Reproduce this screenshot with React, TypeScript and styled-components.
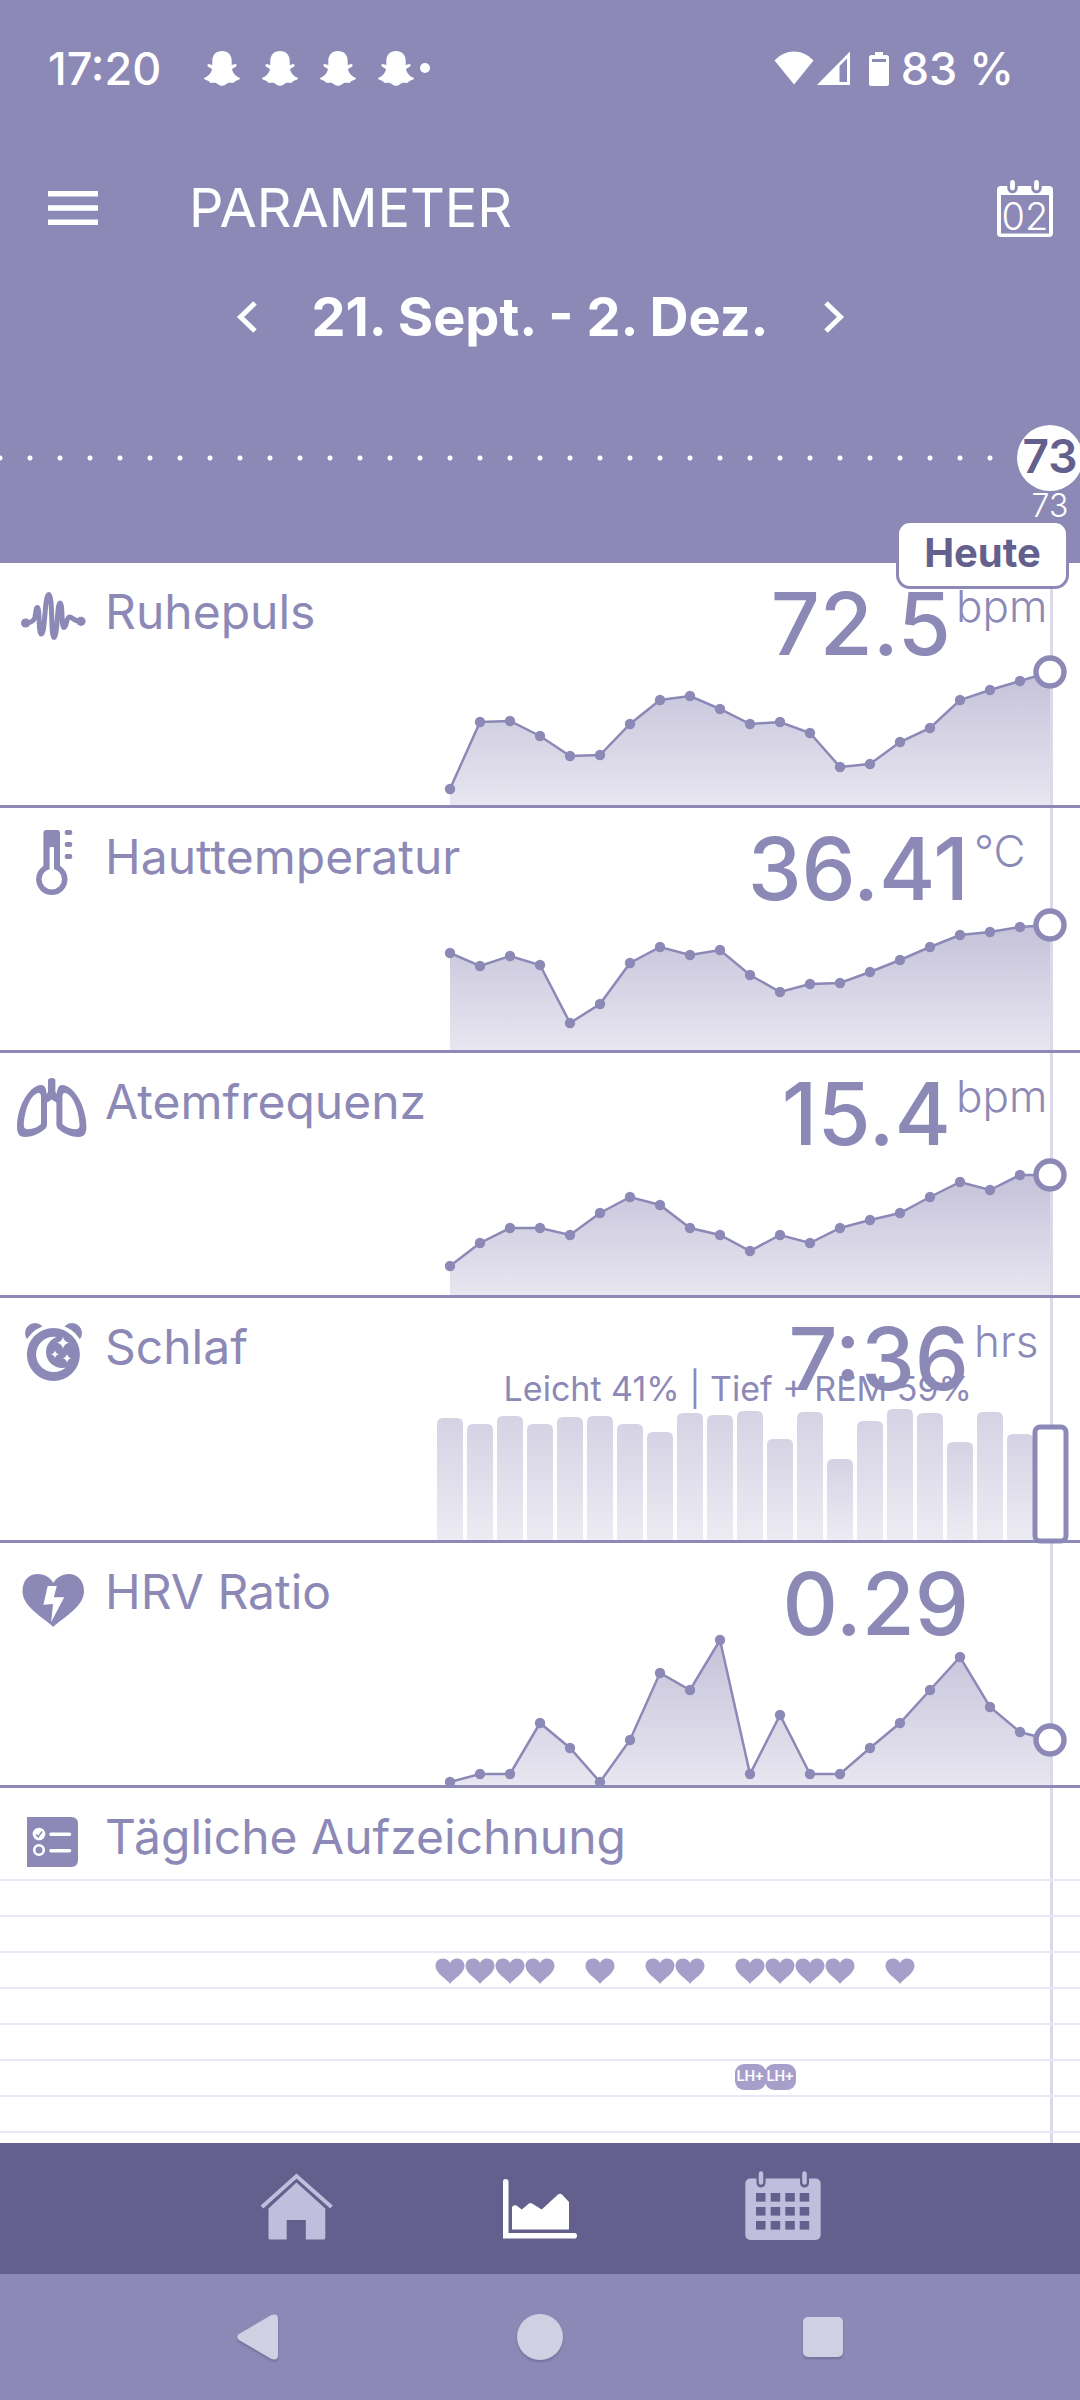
import React, { useId } from "react";
import styled, { createGlobalStyle } from "styled-components";

const color = {
  lilac: "#8d89b7",
  deep: "#63608d",
  guide: "#dcd9ea",
  rule: "#e9e7f6",
  mark: "#a69fca",
  idle: "#c1bddd",
  system: "#d1cfe2",
};

const SLOT = 30;
const CHART_HEIGHT = 242;

const GlobalStyle = createGlobalStyle`
  *, *::before, *::after { box-sizing: border-box; }
  body {
    margin: 0;
    background: #fff;
    font-family: Inter, "Liberation Sans", sans-serif;
    color: ${color.lilac};
  }
  button { border: 0; padding: 0; background: none; color: inherit; font: inherit; cursor: pointer; }
  h1, h2, p { margin: 0; font-weight: inherit; }
  svg { display: block; overflow: visible; }
`;

const Screen = styled.div`
  display: flex;
  flex-direction: column;
  min-height: 100vh;
  overflow: hidden;
`;

const Header = styled.header`
  background: ${color.lilac};
  color: #fff;
`;

const StatusBar = styled.div`
  display: flex;
  align-items: center;
  height: 136px;
  padding: 0 66px 0 48px;
  font-size: 45px;
  font-weight: 500;
`;

const Clock = styled.time`
  width: 156px;
`;

const Notifications = styled.div`
  display: flex;
  align-items: center;
  gap: 22px;
  flex: 1;
`;

const MoreDot = styled.span`
  width: 10px;
  height: 10px;
  margin-left: -16px;
  border-radius: 50%;
  background: #fff;
`;

const Signals = styled.div`
  display: flex;
  align-items: center;
  margin-right: 12px;
`;

const AppBar = styled.div`
  display: flex;
  align-items: center;
  height: 144px;
  padding: 0 27px 0 48px;
`;

const Title = styled.h1`
  flex: 1;
  padding-left: 91px;
  font-size: 54px;
  line-height: 60px;
  font-weight: 400;
`;

const TodayButton = styled.button`
  display: grid;
  width: 56px;
  height: 57px;

  > * { grid-area: 1 / 1; }
`;

const TodayNumber = styled.span`
  padding-top: 17px;
  font-size: 38px;
  line-height: 38px;
  font-weight: 300;
  text-align: center;
`;

const RangePicker = styled.div`
  display: flex;
  align-items: center;
  justify-content: center;
  height: 74px;
`;

const Range = styled.h2`
  width: 567px;
  font-size: 54px;
  line-height: 60px;
  font-weight: 700;
  text-align: center;
  white-space: nowrap;
`;

const Timeline = styled.div`
  position: relative;
  display: flex;
  height: 209px;
  padding-top: 71px;
`;

const Track = styled.div`
  flex: 1;
  height: 66px;
  margin-right: 15px;
  background: radial-gradient(circle, #fff 2px, transparent 3px) right center / ${SLOT}px 66px repeat-x;
`;

const DayMark = styled.div`
  display: flex;
  flex-direction: column;
  align-items: center;
  width: 60px;
`;

const DayCircle = styled.strong`
  flex: none;
  width: 66px;
  height: 66px;
  border-radius: 50%;
  background: #fff;
  color: ${color.deep};
  font-size: 46px;
  line-height: 62px;
  font-weight: 600;
  text-align: center;
`;

const DayNumber = styled.span`
  font-size: 32px;
  line-height: 30px;
  font-weight: 300;
`;

const TodayTag = styled.div`
  position: absolute;
  right: 11px;
  bottom: -26px;
  width: 173px;
  height: 69px;
  border: 3px solid ${color.lilac};
  border-radius: 14px;
  background: #fff;
  color: ${color.deep};
  font-size: 40px;
  line-height: 60px;
  font-weight: 700;
  text-align: center;
`;

const Panels = styled.main`
  flex: 1;
  display: flex;
  flex-direction: column;
  background: linear-gradient(${color.guide}, ${color.guide}) right 27px top / 3px 100% no-repeat #fff;
`;

const Panel = styled.section`
  display: grid;
  height: 245px;
  border-bottom: 3px solid ${color.lilac};

  > * { grid-area: 1 / 1; }
`;

const PanelHead = styled.div`
  display: flex;
  align-items: flex-start;
  height: 91px;
`;

const IconBox = styled.svg`
  flex: none;
  width: 105px;
  height: 92px;
  color: ${color.lilac};
`;

const Label = styled.h2`
  flex: 1;
  padding-top: 25px;
  font-size: 48px;
  line-height: 48px;
  font-weight: 400;
  white-space: nowrap;
`;

const Reading = styled.p`
  padding-top: 18px;
  font-size: 86px;
  line-height: 86px;
  font-weight: 500;
`;

const Unit = styled.span<{ $wide: boolean }>`
  width: ${(p) => (p.$wide ? 129 : 111)}px;
  padding: 21px 0 0 5px;
  font-size: 44px;
  line-height: 44px;
  font-weight: 300;
`;

const Note = styled.p`
  justify-self: end;
  padding: 74px 108px 0 0;
  font-size: 34px;
  line-height: 34px;
  font-weight: 400;
`;

const Plot = styled.svg`
  justify-self: end;
  width: ${SLOT * 21}px;
  height: ${CHART_HEIGHT}px;
  margin-right: 15px;
`;

const Log = styled.section`
  flex: 1;
`;

const LogRow = styled.div`
  display: grid;
  grid-template-columns: repeat(21, ${SLOT}px);
  justify-content: end;
  justify-items: center;
  align-items: center;
  height: 36px;
  padding: 2px 15px 0 0;
  border-top: 2px solid ${color.rule};
`;

const Slot = styled.span<{ $day: number }>`
  grid-column: ${(p) => p.$day + 1};
  grid-row: 1;
`;

const LhBadge = styled.span`
  display: block;
  width: 31px;
  height: 26px;
  margin-bottom: 4px;
  border-radius: 9px;
  background: ${color.mark};
  color: #fff;
  font-family: Roboto, "Liberation Sans", sans-serif;
  font-size: 15px;
  line-height: 25px;
  font-weight: 500;
  text-align: center;
`;

const TabBar = styled.nav`
  display: flex;
  justify-content: center;
  height: 131px;
  background: ${color.deep};
`;

const Tab = styled.a<{ $active?: boolean }>`
  display: flex;
  justify-content: center;
  width: 243px;
  padding-top: 28px;
  color: ${(p) => (p.$active ? "#fff" : color.idle)};
`;

const SystemBar = styled.div`
  display: flex;
  justify-content: center;
  align-items: center;
  height: 126px;
  background: ${color.lilac};
`;

const SystemButton = styled.button`
  display: flex;
  justify-content: center;
  width: 283px;

  svg { filter: drop-shadow(0 2px 1px rgba(70, 66, 110, 0.35)); }
`;

const Ghost = () => (
  <svg width="36" height="35" viewBox="0 0 36 35" fill="#fff" aria-hidden="true">
    <path d="M18 0C12 0 8.3 4 8.3 10V14L4.6 13C3 13.2 3 15 4.2 15.8L8 18C7.3 22 4 25.5.4 26.8C-.2 27.6 0 28 1 28.6L5 30.2L6 31.8L11.5 31.8C13.5 32.5 15 34.8 18 34.8C21 34.8 22.5 32.5 24.5 31.8L30 31.8L31 30.2L35 28.6C36 28 36.2 27.6 35.6 26.8C32 25.5 28.7 22 28 18L31.8 15.8C33 15 33 13.2 31.4 13L27.7 14V10C27.7 4 24 0 18 0Z" />
  </svg>
);

const PulseIcon = () => (
  <IconBox viewBox="0 0 105 92" aria-hidden="true">
    <g fill="currentColor">
      <circle cx="25.6" cy="60" r="4.6" />
      <circle cx="81" cy="58.3" r="4.6" />
    </g>
    <path
      d="M25.6 60C31 60 34 58 35 54C36 48 36 44.5 37.5 44.5C39.8 44.5 38.3 71 41.3 71C45.3 71 44.5 31.5 48.8 31.5C53 31.5 50.5 74.5 54 74.5C57.5 74.5 57 40 60 40C63 40 61 64.5 64 64.5C67 64.5 66 54 69.5 54C73 54 74 59 81 58.3"
      fill="none"
      stroke="currentColor"
      strokeWidth="5"
      strokeLinecap="round"
    />
  </IconBox>
);

const ThermometerIcon = () => (
  <IconBox viewBox="0 0 105 92" fill="currentColor" aria-hidden="true">
    <rect x="43.4" y="22" width="16.6" height="45" rx="3" />
    <circle cx="51.8" cy="71.3" r="15.7" />
    <circle cx="51.8" cy="71.3" r="10.2" fill="#fff" />
    <path d="M49.6 64V40Q49.6 39 50.6 39H53Q54 39 54 40V64Z" fill="#fff" />
    <rect x="64.7" y="22" width="7.5" height="5" rx="2" />
    <rect x="64.7" y="34" width="7.5" height="5" rx="2" />
    <rect x="64.7" y="46" width="7.5" height="5" rx="2" />
  </IconBox>
);

const LUNG =
  "M41 32C30.5 32 17 52 17 74C17 80 19 84 24.5 84C34 84 42 79 45.5 75.5C47 74 47 72 47 70V48C47 38 46 32 41 32ZM38 40C30 42 24.5 58 23.8 72C23.8 75 25 76.2 28 76.2C33 76.2 38 74 41 71V44C41 41 40 39.5 38 40Z";

const LungsIcon = () => (
  <IconBox viewBox="0 0 105 92" fill="currentColor" fillRule="evenodd" aria-hidden="true">
    <path d={LUNG} />
    <path d={LUNG} transform="translate(103.4 0) scale(-1 1)" />
    <path d="M48 27.5Q48 25 51.7 25Q55.4 25 55.4 27.5V39L58.5 43V51L51.7 46.5L45 51V43L48 39Z" />
  </IconBox>
);

const SleepIcon = () => (
  <IconBox viewBox="0 0 105 92" fill="currentColor" aria-hidden="true">
    <circle cx="35" cy="35" r="10" />
    <circle cx="72" cy="35" r="10" />
    <circle cx="53.4" cy="57.5" r="31" fill="#fff" />
    <circle cx="53.4" cy="56.5" r="26.5" />
    <circle cx="53.8" cy="56.4" r="17.7" fill="#fff" />
    <circle cx="62" cy="54" r="16" />
    <g fill="#fff">
      <path d="M63 38.7Q64 43.7 69 44.7Q64 45.7 63 50.7Q62 45.7 57 44.7Q62 43.7 63 38.7Z" />
      <path d="M55 52.3Q55.6 55.7 59 56.3Q55.6 56.9 55 60.3Q54.4 56.9 51 56.3Q54.4 55.7 55 52.3Z" />
      <path d="M67 56Q67.8 59.5 71.3 60.3Q67.8 61.1 67 64.6Q66.2 61.1 62.7 60.3Q66.2 59.5 67 56Z" />
    </g>
  </IconBox>
);

const HeartBoltIcon = () => (
  <IconBox viewBox="0 0 105 92" aria-hidden="true">
    <path
      d="M53.3 84C43 74 22.5 64 22.5 48C22.5 37 29 31 38 31C45 31 51 35 53.3 40C56 35 62 31 68.5 31C77 31 84 37 84 48C84 64 63.5 74 53.3 84Z"
      fill="currentColor"
    />
    <path d="M47.7 43H56.8L53.8 54.3H64.2L51.2 79L53 61L43.4 61.7Z" fill="#fff" />
  </IconBox>
);

const LogIcon = () => (
  <IconBox viewBox="0 0 105 92" aria-hidden="true">
    <path d="M27 29H71Q78 29 78 36V72Q78 79 71 79H27Z" fill="currentColor" />
    <circle cx="39" cy="46" r="6.3" fill="#fff" />
    <path d="M36 46.5L38.3 48.8L42 43.5" fill="none" stroke="currentColor" strokeWidth="1.4" />
    <circle cx="39" cy="62" r="4.8" fill="none" stroke="#fff" strokeWidth="2.6" />
    <path d="M51 46.3H69.5M51 62.7H69.5" stroke="#fff" strokeWidth="3.6" strokeLinecap="round" />
  </IconBox>
);

const slotX = (i: number) => i * SLOT + SLOT / 2;

function AreaPlot({ tops }: { tops: number[] }) {
  const id = useId();
  const line = tops.map((y, i) => `${slotX(i)},${y}`).join(" ");
  const last = tops.length - 1;
  return (
    <Plot viewBox={`0 0 ${SLOT * 21} ${CHART_HEIGHT}`} aria-hidden="true">
      <defs>
        <linearGradient id={id} x1="0" y1="0" x2="0" y2="1">
          <stop offset="0" stopColor="#c5c2da" />
          <stop offset="1" stopColor="#e8e6f0" />
        </linearGradient>
        <clipPath id={`${id}c`}>
          <rect x="0" y="0" width={SLOT * 22} height={CHART_HEIGHT} />
        </clipPath>
      </defs>
      <g clipPath={`url(#${id}c)`}>
        <polygon points={`${slotX(0)},${CHART_HEIGHT} ${line} ${slotX(last)},${CHART_HEIGHT}`} fill={`url(#${id})`} />
        <polyline points={line} fill="none" stroke={color.lilac} strokeWidth="2.5" />
        {tops.slice(0, last).map((y, i) => (
          <circle key={i} cx={slotX(i)} cy={y} r="5.2" fill={color.lilac} />
        ))}
      </g>
      <circle cx={slotX(last)} cy={tops[last]} r="14" fill="#fff" stroke={color.lilac} strokeWidth="5.4" />
    </Plot>
  );
}

function BarPlot({ tops }: { tops: number[] }) {
  const id = useId();
  const last = tops.length - 1;
  return (
    <Plot viewBox={`0 0 ${SLOT * 21} ${CHART_HEIGHT}`} aria-hidden="true">
      <defs>
        <linearGradient id={id} x1="0" y1="0" x2="0" y2="1">
          <stop offset="0" stopColor="#d5d2e4" />
          <stop offset="1" stopColor="#edebf3" />
        </linearGradient>
      </defs>
      {tops.slice(0, last).map((y, i) => (
        <path
          key={i}
          d={`M${slotX(i) - 13} ${CHART_HEIGHT}V${y + 6}q0 -6 6 -6h14q6 0 6 6V${CHART_HEIGHT}Z`}
          fill={`url(#${id})`}
        />
      ))}
      <rect
        x={slotX(last) - 15}
        y={tops[last] + 2}
        width="31"
        height={CHART_HEIGHT - tops[last] - 1}
        rx="5"
        fill="#fff"
        stroke={color.lilac}
        strokeWidth="5"
      />
    </Plot>
  );
}

const metrics = [
  {
    label: "Ruhepuls", Icon: PulseIcon, value: "72.5", unit: "bpm",
    tops: [226, 159, 158, 173, 193, 192, 161, 137, 133, 146, 161, 159, 170, 204, 201, 179, 165, 137, 127, 118, 109],
  },
  {
    label: "Hauttemperatur", Icon: ThermometerIcon, value: "36.41", unit: "°C",
    tops: [145, 158, 148, 157, 215, 196, 155, 139, 147, 142, 167, 184, 176, 175, 164, 152, 139, 127, 124, 119, 117],
  },
  {
    label: "Atemfrequenz", Icon: LungsIcon, value: "15.4", unit: "bpm",
    tops: [213, 190, 175, 175, 182, 160, 144, 152, 175, 182, 198, 182, 190, 175, 167, 160, 144, 129, 137, 122, 122],
  },
  {
    label: "Schlaf", Icon: SleepIcon, value: "7:36", unit: "hrs", bars: true, note: "Leicht 41% | Tief + REM 59%",
    tops: [120, 126, 118, 126, 119, 118, 126, 134, 115, 117, 113, 141, 114, 161, 123, 111, 115, 144, 114, 136, 127],
  },
  {
    label: "HRV Ratio", Icon: HeartBoltIcon, value: "0.29", unit: "",
    tops: [239, 231, 231, 180, 205, 239, 197, 130, 147, 97, 231, 172, 231, 231, 205, 180, 147, 114, 164, 189, 197],
  },
];

const heartDays = [0, 1, 2, 3, 5, 7, 8, 10, 11, 12, 13, 15];
const lhDays = [10, 11];

const logRows: { id: string; marks: React.ReactNode }[] = [
  { id: "a", marks: null },
  { id: "b", marks: null },
  {
    id: "hearts",
    marks: heartDays.map((d) => (
      <Slot key={d} $day={d}>
        <svg width="30" height="26" viewBox="0 0 30 26" fill={color.mark} aria-hidden="true">
          <path d="M15 26C12 21 .5 15.500 .5 8C.5 3.500 3.500 .5 8 .5C11 .5 14 2.500 15 5C16 2.500 19 .5 22 .5C26.500 .5 29.500 3.500 29.500 8C29.500 15.500 18 21 15 26Z" />
        </svg>
      </Slot>
    )),
  },
  { id: "c", marks: null },
  { id: "d", marks: null },
  {
    id: "lh",
    marks: lhDays.map((d) => (
      <Slot key={d} $day={d}>
        <LhBadge>LH+</LhBadge>
      </Slot>
    )),
  },
  { id: "e", marks: null },
];

const LogEnd = styled.div`
  height: 12px;
  border-top: 2px solid ${color.rule};
`;

export default function App() {
  return (
    <Screen>
      <GlobalStyle />
      <Header>
        <StatusBar>
          <Clock>17:20</Clock>
          <Notifications>
            <Ghost />
            <Ghost />
            <Ghost />
            <Ghost />
            <MoreDot />
          </Notifications>
          <Signals>
            <svg width="115" height="35" viewBox="0 0 115 35" fill="#fff" aria-hidden="true">
              <path d="M.5 9.500C12 -2.500 28 -2.500 39.500 9.500L20 33.500Z" />
              <path fillRule="evenodd" d="M43 34L76 .5V34ZM65.500 15V31H73V7.500Z" />
              <path fillRule="evenodd" d="M101 1H109V4H112.500Q115 4 115 6.500V32.500Q115 35 112.500 35H97.500Q95 35 95 32.500V6.500Q95 4 97.500 4H101ZM98 8V11H112V8Z" />
            </svg>
          </Signals>
          <span>83 %</span>
        </StatusBar>
        <AppBar>
          <button aria-label="Menü">
            <svg width="50" height="34" viewBox="0 0 50 34" fill="#fff" aria-hidden="true">
              <path d="M0 0H50V5.500H0ZM0 14.300H50V19.800H0ZM0 28.500H50V34H0Z" />
            </svg>
          </button>
          <Title>PARAMETER</Title>
          <TodayButton aria-label="Heute, 02">
            <svg width="56" height="57" viewBox="0 0 56 57" aria-hidden="true">
              <path
                d="M4 6H52Q56 6 56 10V53Q56 57 52 57H4Q0 57 0 53V10Q0 6 4 6ZM4 15V53.500H52V15Z"
                fill="#fff"
                fillRule="evenodd"
              />
              <path d="M15.500 3V8M39.500 3V8" stroke={color.lilac} strokeWidth="10.500" strokeLinecap="round" />
              <path d="M15.500 2.500V8M39.500 2.500V8" stroke="#fff" strokeWidth="4.800" strokeLinecap="round" />
            </svg>
            <TodayNumber>02</TodayNumber>
          </TodayButton>
        </AppBar>
        <RangePicker>
          <button aria-label="Zurück">
            <svg width="20" height="32" viewBox="0 0 20 32" fill="none" stroke="#fff" strokeWidth="5" aria-hidden="true">
              <path d="M18 2L3.500 16L18 30" />
            </svg>
          </button>
          <Range>21. Sept. - 2. Dez.</Range>
          <button aria-label="Weiter">
            <svg width="20" height="32" viewBox="0 0 20 32" fill="none" stroke="#fff" strokeWidth="5" aria-hidden="true">
              <path d="M2 2L16.500 16L2 30" />
            </svg>
          </button>
        </RangePicker>
        <Timeline>
          <Track />
          <DayMark>
            <DayCircle>73</DayCircle>
            <DayNumber>73</DayNumber>
          </DayMark>
          <TodayTag>Heute</TodayTag>
        </Timeline>
      </Header>

      <Panels>
        {metrics.map(({ label, Icon, value, unit, tops, bars, note }) => (
          <Panel key={label}>
            {bars ? <BarPlot tops={tops} /> : <AreaPlot tops={tops} />}
            <PanelHead>
              <Icon />
              <Label>{label}</Label>
              <Reading>{value}</Reading>
              <Unit $wide={unit === "bpm"}>{unit}</Unit>
            </PanelHead>
            {note && <Note>{note}</Note>}
          </Panel>
        ))}
        <Log>
          <PanelHead>
            <LogIcon />
            <Label>Tägliche Aufzeichnung</Label>
          </PanelHead>
          {logRows.map((row) => (
            <LogRow key={row.id}>{row.marks}</LogRow>
          ))}
          <LogEnd />
        </Log>
      </Panels>

      <TabBar>
        <Tab href="#home" aria-label="Start">
          <svg width="76" height="70" viewBox="0 0 76 70" fill="currentColor" aria-hidden="true">
            <path d="M3 36L37.500 5L72.500 36" fill="none" stroke="currentColor" strokeWidth="3.800" />
            <path d="M37.500 11.500L66.300 37.500V67Q66.300 68.500 64.800 68.500H46.800V49H27.700V68.500H11Q9.500 68.500 9.500 67V37.500Z" />
          </svg>
        </Tab>
        <Tab href="#parameter" aria-label="Parameter" aria-current="page" $active>
          <svg width="76" height="70" viewBox="0 0 76 70" fill="currentColor" aria-hidden="true">
            <path d="M1 10.500Q1 8 3.700 8Q6.500 8 6.500 10.500V62H72.500Q75 62 75 64.700Q75 67.500 72.500 67.500H1Z" />
            <path d="M10 58.500V36Q11.500 33.500 14.500 34.500L19.800 38.500L27 32.500Q28.500 31.500 30 32.500L39.700 38.500L56 23.500Q58 22 60 23.500L67 31V58.500Z" />
          </svg>
        </Tab>
        <Tab href="#kalender" aria-label="Kalender">
          <svg width="76" height="70" viewBox="0 0 76 70" fill="currentColor" aria-hidden="true">
            <rect x=".3" y="7.500" width="75.400" height="61.500" rx="5" />
            <path d="M16 3V12M59.500 3V12" stroke={color.deep} strokeWidth="9" strokeLinecap="round" />
            <path d="M16 2.500V11.500M59.500 2.500V11.500" stroke="currentColor" strokeWidth="4.500" strokeLinecap="round" />
            <g fill={color.deep}>
              {[22, 36, 50].map((y) => [11, 25.7, 40.3, 54.7].map((x) => <rect key={`${x}-${y}`} x={x} y={y} width="9.500" height="8.600" />))}
            </g>
          </svg>
        </Tab>
      </TabBar>
      <SystemBar>
        <SystemButton aria-label="Zurück">
          <svg width="41" height="46" viewBox="0 0 41 46" fill={color.system} aria-hidden="true">
            <path d="M2 20L33.500 1.500Q41 -1.500 41 5V41Q41 47.500 33.500 44.500L2 26Q-1.500 23 2 20Z" />
          </svg>
        </SystemButton>
        <SystemButton aria-label="Startbildschirm">
          <svg width="46" height="46" viewBox="0 0 46 46" fill={color.system} aria-hidden="true">
            <circle cx="23" cy="23" r="23" />
          </svg>
        </SystemButton>
        <SystemButton aria-label="Letzte Apps">
          <svg width="40" height="40" viewBox="0 0 40 40" fill={color.system} aria-hidden="true">
            <rect width="40" height="40" rx="5" />
          </svg>
        </SystemButton>
      </SystemBar>
    </Screen>
  );
}
